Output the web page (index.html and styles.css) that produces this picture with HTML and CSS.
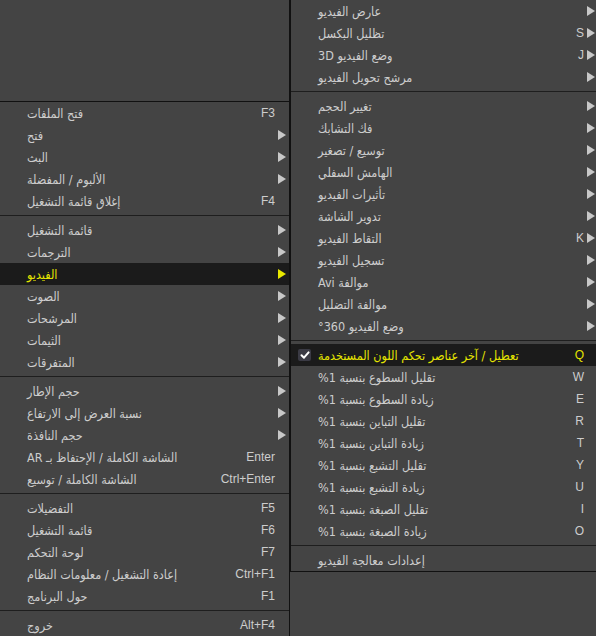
FILE: index.html
```html
<!DOCTYPE html>
<html lang="ar">
<head>
<meta charset="utf-8">
<title>Menu</title>
<link rel="stylesheet" href="styles.css">
</head>
<body>
<div class="menu menu-main">
  <div class="item"><span class="label" dir="rtl">فتح الملفات</span><span class="key">F3</span><span class="arr"></span></div>
  <div class="item"><span class="label" dir="rtl">فتح</span><span class="key"></span><span class="arr"><svg viewBox="0 0 8 10"><path d="M0 0L8 5L0 10Z"/></svg></span></div>
  <div class="item"><span class="label" dir="rtl">البث</span><span class="key"></span><span class="arr"><svg viewBox="0 0 8 10"><path d="M0 0L8 5L0 10Z"/></svg></span></div>
  <div class="item"><span class="label" dir="rtl">الألبوم / المفضلة</span><span class="key"></span><span class="arr"><svg viewBox="0 0 8 10"><path d="M0 0L8 5L0 10Z"/></svg></span></div>
  <div class="item"><span class="label" dir="rtl">إغلاق قائمة التشغيل</span><span class="key">F4</span><span class="arr"></span></div>
  <div class="sep"></div>
  <div class="item"><span class="label" dir="rtl">قائمة التشغيل</span><span class="key"></span><span class="arr"><svg viewBox="0 0 8 10"><path d="M0 0L8 5L0 10Z"/></svg></span></div>
  <div class="item"><span class="label" dir="rtl">الترجمات</span><span class="key"></span><span class="arr"><svg viewBox="0 0 8 10"><path d="M0 0L8 5L0 10Z"/></svg></span></div>
  <div class="item active"><span class="label" dir="rtl">الفيديو</span><span class="key"></span><span class="arr"><svg viewBox="0 0 8 10"><path d="M0 0L8 5L0 10Z"/></svg></span></div>
  <div class="item"><span class="label" dir="rtl">الصوت</span><span class="key"></span><span class="arr"><svg viewBox="0 0 8 10"><path d="M0 0L8 5L0 10Z"/></svg></span></div>
  <div class="item"><span class="label" dir="rtl">المرشحات</span><span class="key"></span><span class="arr"><svg viewBox="0 0 8 10"><path d="M0 0L8 5L0 10Z"/></svg></span></div>
  <div class="item"><span class="label" dir="rtl">الثيمات</span><span class="key"></span><span class="arr"><svg viewBox="0 0 8 10"><path d="M0 0L8 5L0 10Z"/></svg></span></div>
  <div class="item"><span class="label" dir="rtl">المتفرقات</span><span class="key"></span><span class="arr"><svg viewBox="0 0 8 10"><path d="M0 0L8 5L0 10Z"/></svg></span></div>
  <div class="sep"></div>
  <div class="item"><span class="label" dir="rtl">حجم الإطار</span><span class="key"></span><span class="arr"><svg viewBox="0 0 8 10"><path d="M0 0L8 5L0 10Z"/></svg></span></div>
  <div class="item"><span class="label" dir="rtl">نسبة العرض إلى الارتفاع</span><span class="key"></span><span class="arr"><svg viewBox="0 0 8 10"><path d="M0 0L8 5L0 10Z"/></svg></span></div>
  <div class="item"><span class="label" dir="rtl">حجم النافذة</span><span class="key"></span><span class="arr"><svg viewBox="0 0 8 10"><path d="M0 0L8 5L0 10Z"/></svg></span></div>
  <div class="item"><span class="label" dir="rtl">الشاشة الكاملة / الإحتفاظ بـ AR</span><span class="key">Enter</span><span class="arr"></span></div>
  <div class="item"><span class="label" dir="rtl">الشاشة الكاملة / توسيع</span><span class="key">Ctrl+Enter</span><span class="arr"></span></div>
  <div class="sep"></div>
  <div class="item"><span class="label" dir="rtl">التفضيلات</span><span class="key">F5</span><span class="arr"></span></div>
  <div class="item"><span class="label" dir="rtl">قائمة التشغيل</span><span class="key">F6</span><span class="arr"></span></div>
  <div class="item"><span class="label" dir="rtl">لوحة التحكم</span><span class="key">F7</span><span class="arr"></span></div>
  <div class="item"><span class="label" dir="rtl">إعادة التشغيل / معلومات النظام</span><span class="key">Ctrl+F1</span><span class="arr"></span></div>
  <div class="item"><span class="label" dir="rtl">حول البرنامج</span><span class="key">F1</span><span class="arr"></span></div>
  <div class="sep"></div>
  <div class="item"><span class="label" dir="rtl">خروج</span><span class="key">Alt+F4</span><span class="arr"></span></div>
</div>

<div class="menu menu-sub">
  <div class="item"><span class="label" dir="rtl">عارض الفيديو</span><span class="key"></span><span class="arr"><svg viewBox="0 0 8 10"><path d="M0 0L8 5L0 10Z"/></svg></span></div>
  <div class="item"><span class="label" dir="rtl">تظليل البكسل</span><span class="key">S</span><span class="arr"><svg viewBox="0 0 8 10"><path d="M0 0L8 5L0 10Z"/></svg></span></div>
  <div class="item"><span class="label" dir="rtl">وضع الفيديو 3D</span><span class="key">J</span><span class="arr"><svg viewBox="0 0 8 10"><path d="M0 0L8 5L0 10Z"/></svg></span></div>
  <div class="item"><span class="label" dir="rtl">مرشح تحويل الفيديو</span><span class="key"></span><span class="arr"><svg viewBox="0 0 8 10"><path d="M0 0L8 5L0 10Z"/></svg></span></div>
  <div class="sep"></div>
  <div class="item"><span class="label" dir="rtl">تغيير الحجم</span><span class="key"></span><span class="arr"><svg viewBox="0 0 8 10"><path d="M0 0L8 5L0 10Z"/></svg></span></div>
  <div class="item"><span class="label" dir="rtl">فك التشابك</span><span class="key"></span><span class="arr"><svg viewBox="0 0 8 10"><path d="M0 0L8 5L0 10Z"/></svg></span></div>
  <div class="item"><span class="label" dir="rtl">توسيع / تصغير</span><span class="key"></span><span class="arr"><svg viewBox="0 0 8 10"><path d="M0 0L8 5L0 10Z"/></svg></span></div>
  <div class="item"><span class="label" dir="rtl">الهامش السفلي</span><span class="key"></span><span class="arr"><svg viewBox="0 0 8 10"><path d="M0 0L8 5L0 10Z"/></svg></span></div>
  <div class="item"><span class="label" dir="rtl">تأثيرات الفيديو</span><span class="key"></span><span class="arr"><svg viewBox="0 0 8 10"><path d="M0 0L8 5L0 10Z"/></svg></span></div>
  <div class="item"><span class="label" dir="rtl">تدوير الشاشة</span><span class="key"></span><span class="arr"><svg viewBox="0 0 8 10"><path d="M0 0L8 5L0 10Z"/></svg></span></div>
  <div class="item"><span class="label" dir="rtl">التقاط الفيديو</span><span class="key">K</span><span class="arr"><svg viewBox="0 0 8 10"><path d="M0 0L8 5L0 10Z"/></svg></span></div>
  <div class="item"><span class="label" dir="rtl">تسجيل الفيديو</span><span class="key"></span><span class="arr"><svg viewBox="0 0 8 10"><path d="M0 0L8 5L0 10Z"/></svg></span></div>
  <div class="item"><span class="label" dir="rtl">موالفة Avi</span><span class="key"></span><span class="arr"><svg viewBox="0 0 8 10"><path d="M0 0L8 5L0 10Z"/></svg></span></div>
  <div class="item"><span class="label" dir="rtl">موالفة التضليل</span><span class="key"></span><span class="arr"><svg viewBox="0 0 8 10"><path d="M0 0L8 5L0 10Z"/></svg></span></div>
  <div class="item"><span class="label" dir="rtl">وضع الفيديو 360°</span><span class="key"></span><span class="arr"><svg viewBox="0 0 8 10"><path d="M0 0L8 5L0 10Z"/></svg></span></div>
  <div class="sep"></div>
  <div class="item active"><span class="check"><svg viewBox="0 0 12 12"><path d="M2.5 6.2L5 8.7L9.6 3.4"/></svg></span><span class="label" dir="rtl">تعطيل / آخر عناصر تحكم اللون المستخدمة</span><span class="key">Q</span><span class="arr"></span></div>
  <div class="item"><span class="label" dir="rtl">تقليل السطوع بنسبة 1%</span><span class="key">W</span><span class="arr"></span></div>
  <div class="item"><span class="label" dir="rtl">زيادة السطوع بنسبة 1%</span><span class="key">E</span><span class="arr"></span></div>
  <div class="item"><span class="label" dir="rtl">تقليل التباين بنسبة 1%</span><span class="key">R</span><span class="arr"></span></div>
  <div class="item"><span class="label" dir="rtl">زيادة التباين بنسبة 1%</span><span class="key">T</span><span class="arr"></span></div>
  <div class="item"><span class="label" dir="rtl">تقليل التشبع بنسبة 1%</span><span class="key">Y</span><span class="arr"></span></div>
  <div class="item"><span class="label" dir="rtl">زيادة التشبع بنسبة 1%</span><span class="key">U</span><span class="arr"></span></div>
  <div class="item"><span class="label" dir="rtl">تقليل الصبغة بنسبة 1%</span><span class="key">I</span><span class="arr"></span></div>
  <div class="item"><span class="label" dir="rtl">زيادة الصبغة بنسبة 1%</span><span class="key">O</span><span class="arr"></span></div>
  <div class="sep"></div>
  <div class="item"><span class="label" dir="rtl">إعدادات معالجة الفيديو</span><span class="key"></span><span class="arr"></span></div>
</div>
</body>
</html>
```

FILE: styles.css
```css
html, body {
  margin: 0;
  padding: 0;
  width: 596px;
  height: 636px;
  overflow: hidden;
}

body {
  position: relative;
  background: #444444;
  font-family: "Liberation Sans", "DejaVu Sans", sans-serif;
  font-size: 12px;
  color: #cdcdcd;
}

.menu {
  position: absolute;
  background: #444444;
  box-sizing: border-box;
  display: flex;
  flex-direction: column;
}

.menu-main {
  left: 0;
  top: 101px;
  width: 290px;
  bottom: 0;
  border-top: 1px solid #111111;
  border-right: 1px solid #111111;
}

.menu-sub {
  left: 289px;
  top: 0;
  right: 0;
  height: 572px;
  border-left: 2px solid #111111;
  border-bottom: 1px solid #111111;
}

.item {
  height: 22px;
  flex: none;
  display: flex;
  align-items: center;
  position: relative;
  padding-left: 27px;
}

.item.active {
  background: #1b1b1b;
  color: #e5e500;
}

.label {
  font-family: "DejaVu Sans Condensed", "DejaVu Sans", sans-serif;
  font-stretch: condensed;
  font-size: 12.5px;
  white-space: nowrap;
  unicode-bidi: isolate;
}

.key {
  margin-left: auto;
  text-align: right;
  white-space: nowrap;
}

.arr {
  width: 14px;
  flex: none;
  display: flex;
  align-items: center;
  padding-left: 3px;
  box-sizing: border-box;
}

.menu-sub .arr {
  width: 12px;
}

.arr svg {
  width: 8px;
  height: 10px;
  fill: #c8c8c8;
}

.item.active .arr svg {
  fill: #e8e800;
}

.check {
  position: absolute;
  left: 7px;
  top: 5px;
  width: 13px;
  height: 12px;
  border-radius: 2px;
  background: #3a3a44;
  display: flex;
  align-items: center;
  justify-content: center;
}

.check svg {
  width: 12px;
  height: 12px;
  fill: none;
  stroke: #ffffff;
  stroke-width: 2;
  stroke-linecap: round;
  stroke-linejoin: round;
}

.sep {
  height: 7px;
  flex: none;
  display: flex;
  align-items: center;
}

.sep::after {
  content: "";
  display: block;
  width: 100%;
  height: 1px;
  background: #1e1e1e;
}
```
